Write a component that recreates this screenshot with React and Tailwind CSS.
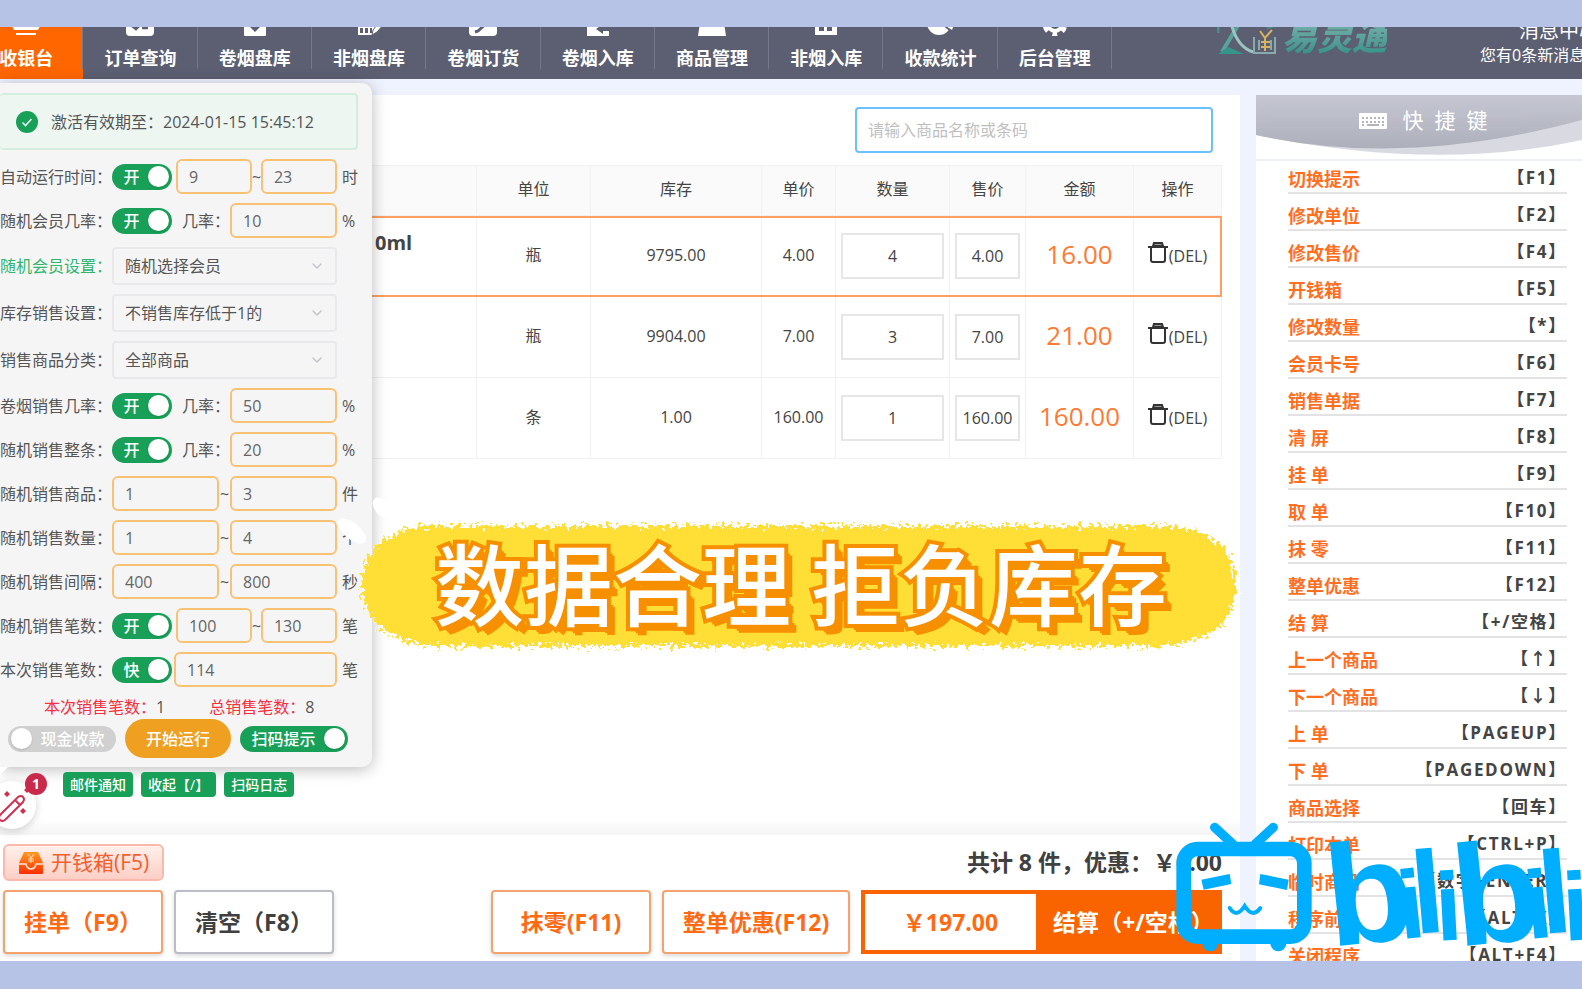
import { useState } from 'react';
import { ChevronDown } from 'lucide-react';

const NAV = [
  { label: '收银台', icon: 'cashier', active: true },
  { label: '订单查询', icon: 'orders' },
  { label: '卷烟盘库', icon: 'check' },
  { label: '非烟盘库', icon: 'gridpen' },
  { label: '卷烟订货', icon: 'edit' },
  { label: '卷烟入库', icon: 'inbound' },
  { label: '商品管理', icon: 'goods' },
  { label: '非烟入库', icon: 'store' },
  { label: '收款统计', icon: 'pie' },
  { label: '后台管理', icon: 'gear' },
];

const ITEMS = [
  { id: 1, name: '0ml', unit: '瓶', stock: '9795.00', price: '4.00', qty: '4', sale: '4.00', total: '16.00' },
  { id: 2, name: '', unit: '瓶', stock: '9904.00', price: '7.00', qty: '3', sale: '7.00', total: '21.00' },
  { id: 3, name: '', unit: '条', stock: '1.00', price: '160.00', qty: '1', sale: '160.00', total: '160.00' },
];

const HOTKEYS = [
  ['切换提示', 'F1'],
  ['修改单位', 'F2'],
  ['修改售价', 'F4'],
  ['开钱箱', 'F5'],
  ['修改数量', '*'],
  ['会员卡号', 'F6'],
  ['销售单据', 'F7'],
  ['清 屏', 'F8'],
  ['挂 单', 'F9'],
  ['取 单', 'F10'],
  ['抹 零', 'F11'],
  ['整单优惠', 'F12'],
  ['结 算', '+/空格'],
  ['上一个商品', '↑'],
  ['下一个商品', '↓'],
  ['上 单', 'PAGEUP'],
  ['下 单', 'PAGEDOWN'],
  ['商品选择', '回车'],
  ['打印本单', 'CTRL+P'],
  ['临时商品', '数字+ENTER'],
  ['程序前台', 'ALT+X'],
  ['关闭程序', 'ALT+F4'],
];

// ─── Icons ───────────────────────────────────────────────────────────────────
function NavIcon({ name }) {
  const bg = '#5c5f71';
  return (
    <svg viewBox="0 0 28 28" className="size-7 shrink-0" fill="#fff">
      {name === 'cashier' && <><path d="M2 4h24v4H2zM2 12h24v3H2zM0 18h28l-2 4H2z" /><path d="M4 25h20v2H4z" /></>}
      {name === 'orders' && <><rect y="4" width="28" height="24" rx="4" /><path d="M6 18l4 3 3-3M16 20h6" stroke={bg} strokeWidth="2.5" fill="none" /></>}
      {name === 'check' && <><rect x="3" y="4" width="22" height="24" rx="1" /><path d="M8 18l6 6 6-6z" fill={bg} /></>}
      {name === 'gridpen' && <><path d="M3 4h20v14l-6 9H3z" /><path d="M5 20h3v5H5zM10 20h3v5h-3zM15 20h2v5h-2z" fill={bg} /><path d="M17 27l1-5 7-9 4 3-7 8z" stroke={bg} strokeWidth="1" /></>}
      {name === 'edit' && <><rect y="4" width="28" height="24" rx="4" /><path d="M6 24l3-1L21 12" stroke={bg} strokeWidth="3" fill="none" /></>}
      {name === 'inbound' && <><path d="M3 4h22v24H3z" /><path d="M12 21l7-5v3h8v4h-8v3z" fill={bg} /></>}
      {name === 'goods' && <path d="M3 8h22l3 20H0z" />}
      {name === 'store' && <><path d="M3 6h22v21H3z" /><path d="M7 17h5v6H7zM15 17h5v6h-5z" fill={bg} /></>}
      {name === 'pie' && <><circle cx="12" cy="15" r="12" /><path d="M14 15l9 7" stroke={bg} strokeWidth="2" /><path d="M18 17h9l-2 5z" /></>}
      {name === 'gear' && (
        <>
          <circle cx="14" cy="16" r="7" stroke="#fff" strokeWidth="4" fill="none" />
          <circle cx="14" cy="16" r="10" stroke="#fff" strokeWidth="5" strokeDasharray="5 5.47" strokeDashoffset="2.5" transform="rotate(90 14 16)" fill="none" />
        </>
      )}
    </svg>
  );
}

function BrandMark() {
  return (
    <svg viewBox="0 0 60 40" className="h-10 w-15" fill="none">
      <path d="M1 10v6" stroke="#3f938a" strokeWidth="3" />
      <path d="M23 5L5 35" stroke="#5aa39c" strokeWidth="4" />
      <path d="M1 37L11 30L27 37z" fill="#36958a" />
      <path d="M14 6q6 24 22 29" stroke="#9cc4c2" strokeWidth="3" />
      <path d="M37 20v16h21V20M42 23v10M54 23v10" stroke="#8aa9ab" strokeWidth="2" />
      <path d="M43 14l5 7 7-8M48 21v13M44 25h9M44 30h9" stroke="#d9b260" strokeWidth="2" />
      <path d="M50 11l8-2" stroke="#3f938a" strokeWidth="2" />
    </svg>
  );
}

function TrashIcon() {
  return (
    <svg viewBox="0 0 20 22" className="h-[22px] w-5" fill="none" stroke="#333" strokeWidth="2">
      <path d="M0 5h20M3 5v13q0 2 2 2h10q2 0 2-2V5" />
      <path d="M5 4l1-3h8l1 3z" fill="#999" />
    </svg>
  );
}

function DrawerIcon() {
  return (
    <svg viewBox="0 0 26 24" className="h-6 w-[26px]">
      <defs>
        <linearGradient id="drawer" x1="0" y1="0" x2="0" y2="1">
          <stop offset="0" stopColor="#ff9a1f" />
          <stop offset="1" stopColor="#ff2d00" />
        </linearGradient>
      </defs>
      <path d="M6 1h14l5 11v10q0 1-1 1H2q-1 0-1-1V12z" fill="url(#drawer)" />
      <path d="M1 13h7q1 5 5 5t5-5h7" stroke="#ffe3d6" strokeWidth="1.5" fill="none" />
      <path d="M10 3l3 4 3-4M13 7v5M10 8h6M10 10h6" stroke="#ffd9b0" strokeWidth="1.2" fill="none" />
    </svg>
  );
}

function WandIcon() {
  return (
    <svg viewBox="0 0 36 36" className="size-9" fill="none" stroke="#d03050" strokeWidth="2">
      <path d="M6 28L24 10q3-2 5 0t0 5L11 33q-3 2-5 0t0-5zM21 13l5 5" />
      <path d="M13 4l3 3-3 3-3-3zM33 0l3 3-3 3-3-3zM29 21l3 3-3 3-3-3z" fill="#d03050" stroke="none" />
    </svg>
  );
}

function KeyboardIcon() {
  return (
    <svg viewBox="0 0 28 16" className="h-4 w-7">
      <rect width="28" height="16" rx="1" fill="#fff" />
      <path d="M3 5h22M3 9h22" stroke="#b3b4c0" strokeWidth="2" strokeDasharray="2 2" />
      <path d="M3 12h2M8 12h12M23 12h2" stroke="#b3b4c0" strokeWidth="2" />
    </svg>
  );
}

// ─── Settings popover ────────────────────────────────────────────────────────
function Toggle({ text, defaultOn = true, label, wide }) {
  const [on, setOn] = useState(defaultOn);
  return (
    <label
      className={`flex h-[26px] shrink-0 cursor-pointer items-center rounded-full px-[3px] font-medium text-white ${
        wide ? 'w-[108px]' : 'w-[60px]'
      } ${on ? 'bg-[#18a058]' : 'flex-row-reverse bg-[#d0d0d0]'}`}
    >
      <input type="checkbox" className="sr-only" aria-label={label || text} checked={on} onChange={e => setOn(e.target.checked)} />
      <span className="flex-1 text-center">{text}</span>
      <span className="size-[21px] rounded-full bg-white shadow-sm" />
    </label>
  );
}

function NumInput({ value, label, size = 'md' }) {
  const width = { sm: 'w-[76px]', md: 'w-[107px]', lg: 'w-[163px]' }[size];
  return (
    <input
      aria-label={label}
      defaultValue={value}
      className={`h-[35px] rounded-md border-2 border-[#f8c276] bg-transparent px-[11px] text-[#666] outline-none ${width}`}
    />
  );
}

function Row({ label, unit, green, children }) {
  return (
    <div className="flex items-center whitespace-nowrap">
      <span className={`w-28 shrink-0 ${green ? 'text-[#2fb56e]' : ''}`}>{label}：</span>
      <div className="flex w-[225px] shrink-0 items-center justify-between">{children}</div>
      {unit && <span className="pl-[5px]">{unit}</span>}
    </div>
  );
}

function SelectRow({ label, value, green }) {
  return (
    <Row label={label} green={green}>
      <div className="relative w-full">
        <select aria-label={label} className="block h-[38px] w-full appearance-none rounded-sm border-2 border-[#e9e9ec] bg-transparent px-[11px] outline-none">
          <option>{value}</option>
        </select>
        <ChevronDown className="pointer-events-none absolute top-[11px] right-3 size-4 text-[#c2c2c8]" strokeWidth={2} />
      </div>
    </Row>
  );
}

function RateRow({ label, value }) {
  return (
    <Row label={label} unit="%">
      <Toggle text="开" label={label} />
      <span className="flex items-center">几率：<NumInput value={value} label={`${label}几率`} /></span>
    </Row>
  );
}

function RangeRow({ label, from, to, unit, toggle }) {
  const size = toggle ? 'sm' : 'md';
  return (
    <Row label={label} unit={unit}>
      {toggle && <Toggle text="开" label={label} />}
      <NumInput value={from} label={`${label}下限`} size={size} />
      {toggle ? <span className="-mx-1">~</span> : <span>~</span>}
      <NumInput value={to} label={`${label}上限`} size={size} />
    </Row>
  );
}

function SettingsPanel() {
  return (
    <div className="absolute top-1 left-0 z-10 w-[372px] text-[#555]">
      <div className="rounded-r-[10px] bg-[#f5f5f5] pt-[10px] pb-[9px] shadow-[0_2px_16px_rgba(0,0,0,0.28)]">
        <div className="mr-[14px] flex h-[57px] items-center rounded-sm border-2 border-l-0 border-[#d3eede] bg-[#edf6f1] pl-4">
          <svg viewBox="0 0 22 22" className="size-[22px]">
            <circle cx="11" cy="11" r="11" fill="#18a058" />
            <path d="M6.5 11.5l3 3 6-6.5" stroke="#e6f5ec" strokeWidth="1.6" fill="none" />
          </svg>
          <span className="pl-[13px]">激活有效期至：2024-01-15 15:45:12</span>
        </div>

        <div className="mt-[9px] flex flex-col gap-[9px]">
          <RangeRow label="自动运行时间" from="9" to="23" unit="时" toggle />
          <RateRow label="随机会员几率" value="10" />
          <SelectRow label="随机会员设置" value="随机选择会员" green />
          <SelectRow label="库存销售设置" value="不销售库存低于1的" />
          <SelectRow label="销售商品分类" value="全部商品" />
          <RateRow label="卷烟销售几率" value="50" />
          <RateRow label="随机销售整条" value="20" />
          <RangeRow label="随机销售商品" from="1" to="3" unit="件" />
          <RangeRow label="随机销售数量" from="1" to="4" unit="个" />
          <RangeRow label="随机销售间隔" from="400" to="800" unit="秒" />
          <RangeRow label="随机销售笔数" from="100" to="130" unit="笔" toggle />
          <Row label="本次销售笔数" unit="笔">
            <Toggle text="快" label="本次销售笔数" />
            <NumInput value="114" label="本次销售笔数" size="lg" />
          </Row>
        </div>

        <div className="mt-2 flex gap-11 pl-11">
          <span><span className="text-[#f5303f]">本次销售笔数：</span>1</span>
          <span><span className="text-[#f5303f]">总销售笔数：</span>8</span>
        </div>
        <div className="flex items-center gap-[9px] pl-2">
          <Toggle text="现金收款" defaultOn={false} wide />
          <button type="button" className="h-[39px] w-[106px] rounded-full bg-[#f0a020] font-medium text-white">开始运行</button>
          <Toggle text="扫码提示" wide />
        </div>
      </div>

      <div className="mt-[5px] flex gap-2 pl-[63px] text-sm font-medium text-white">
        <button type="button" className="h-[25px] rounded-sm bg-[#18a058] px-[7px]">邮件通知</button>
        <button type="button" className="h-[25px] rounded-sm bg-[#18a058] px-[7px]">收起【/】</button>
        <button type="button" className="h-[25px] rounded-sm bg-[#18a058] px-[7px]">扫码日志</button>
      </div>

      <span className="absolute bottom-[22px] left-0 border-t-8 border-r-8 border-t-white border-r-transparent" />
      <button
        type="button"
        aria-label="助手"
        className="absolute -bottom-8 -left-3 flex size-12 items-center justify-center rounded-full bg-white shadow-[0_2px_8px_rgba(0,0,0,0.18)]"
      >
        <WandIcon />
        <span className="absolute -top-2 -right-[11px] flex size-[22px] items-center justify-center rounded-full bg-[#c92a4c] text-sm font-bold text-white">1</span>
      </button>
    </div>
  );
}

// ─── Cart ────────────────────────────────────────────────────────────────────
function CartTable() {
  return (
    <table className="w-full table-fixed border-collapse text-center text-[#444]">
      <colgroup>
        <col />
        <col className="w-[114px]" />
        <col className="w-[171px]" />
        <col className="w-[74px]" />
        <col className="w-[114px]" />
        <col className="w-[76px]" />
        <col className="w-[108px]" />
        <col className="w-[88px]" />
      </colgroup>
      <thead>
        <tr className="h-[50px] bg-[#fafafa]">
          {['', '单位', '库存', '单价', '数量', '售价', '金额', '操作'].map((h, i) => (
            <th key={i} className="border border-[#f1f1f1] pb-1 font-normal">{h}</th>
          ))}
        </tr>
      </thead>
      <tbody>
        {ITEMS.map((it, i) => (
          <tr key={it.id} className={`h-[81px] ${i === 0 ? 'outline-2 -outline-offset-2 outline-[#ff9f63]' : ''}`}>
            <td className="border border-[#f1f1f1] pt-[13px] pl-[374px] text-left align-top text-xl font-bold">{it.name}</td>
            <td className="border border-[#f1f1f1] pb-0.5">{it.unit}</td>
            <td className="border border-[#f1f1f1] pb-0.5">{it.stock}</td>
            <td className="border border-[#f1f1f1] pb-0.5">{it.price}</td>
            <td className="border border-[#f1f1f1] px-[5px]">
              <input aria-label="数量" defaultValue={it.qty} className="h-[46px] w-full border-2 border-[#e6e6e6] text-center outline-none" />
            </td>
            <td className="border border-[#f1f1f1] px-[5px]">
              <input aria-label="售价" defaultValue={it.sale} className="h-[46px] w-full border-2 border-[#e6e6e6] text-center outline-none" />
            </td>
            <td className="border border-[#f1f1f1] pb-1 text-[26px] text-[#ff7a33]">{it.total}</td>
            <td className="border border-[#f1f1f1]">
              <button type="button" className="inline-flex items-start gap-px">
                <TrashIcon />
                <span className="pt-0.5">(DEL)</span>
              </button>
            </td>
          </tr>
        ))}
      </tbody>
    </table>
  );
}

const bigBtn = 'h-16 rounded-sm border-2 bg-white text-[23px] font-bold shadow-[0_2px_4px_rgba(0,0,0,0.15)]';

function Footer() {
  return (
    <footer className="bg-white pt-[9px] pr-[18px] pb-[7px] pl-[3px]">
      <div className="flex h-[37px] items-center justify-between">
        <button
          type="button"
          className="flex h-[37px] items-center gap-[7px] rounded-md border-2 border-[#fbb9ac] bg-linear-to-b from-[#fff0ea] to-[#fccfc6] px-[13px] text-[21px] text-[#f2602f]"
        >
          <DrawerIcon />
          开钱箱(F5)
        </button>
        <p className="text-[23px] font-bold text-[#404040]">共计 8 件，优惠：￥0.00</p>
      </div>
      <div className="mt-[9px] flex gap-[11px]">
        <button type="button" className={`${bigBtn} w-40 border-[#f2a36e] text-[#ff6a13]`}>挂单（F9）</button>
        <button type="button" className={`${bigBtn} w-40 border-[#babcc6] text-[#404040]`}>清空（F8）</button>
        <button type="button" className={`${bigBtn} ml-auto w-40 border-[#f2a36e] text-[#ff6a13]`}>抹零(F11)</button>
        <button type="button" className={`${bigBtn} w-[188px] border-[#f2a36e] text-[#ff6a13]`}>整单优惠(F12)</button>
        <button type="button" className="flex h-16 w-[361px] border-4 border-[#fa6400] bg-[#fa6400] text-[23px] font-bold text-white">
          <span className="flex h-full w-[171px] items-center justify-center bg-white text-[#ff6a13]">￥197.00</span>
          <span className="flex h-full flex-1 items-center pl-[17px] whitespace-nowrap">结算（+/空格）</span>
        </button>
      </div>
    </footer>
  );
}

function Hotkeys() {
  return (
    <aside className="w-[326px] shrink-0 overflow-hidden bg-white">
      <div className="relative h-[66px] border-b-2 border-[#eef0f8]">
        <svg viewBox="0 0 326 64" className="absolute inset-0 h-16 w-full" preserveAspectRatio="none">
          <defs>
            <linearGradient id="hk" x1="0" y1="0" x2="0" y2="1">
              <stop offset="0" stopColor="#c6c7d2" />
              <stop offset="1" stopColor="#adafbb" />
            </linearGradient>
          </defs>
          <path d="M0 0H326V45Q180 77 0 40z" fill="#d9dae1" />
          <path d="M0 0H326V25Q150 73 0 40z" fill="url(#hk)" />
        </svg>
        <h2 className="relative flex h-[52px] items-center justify-center gap-4 pl-2 text-[21px] text-white">
          <KeyboardIcon />
          快&nbsp;&nbsp;捷&nbsp;&nbsp;键
        </h2>
      </div>
      <ul className="-mt-1 mr-[15px] ml-8">
        {HOTKEYS.map(([name, key]) => (
          <li key={name} className="flex h-[37px] items-end justify-between border-b-2 border-[#e3e3e6] font-bold">
            <span className="text-lg leading-[26px] text-[#ff6f1f]">{name}</span>
            <span className="text-[17px] leading-7 tracking-widest text-[#444]">【{key}】</span>
          </li>
        ))}
      </ul>
    </aside>
  );
}

// ─── Overlays ────────────────────────────────────────────────────────────────
function Banner() {
  return (
    <div className="pointer-events-none absolute top-[442px] left-[358px] z-20 flex h-[128px] w-[886px] items-center justify-center">
      <svg viewBox="0 0 886 128" className="absolute inset-0 size-full overflow-visible">
        <defs>
          <filter id="rough" x="-5%" y="-10%" width="110%" height="120%">
            <feTurbulence type="fractalNoise" baseFrequency="0.25" numOctaves="3" seed="4" />
            <feDisplacementMap in="SourceGraphic" scale="18" xChannelSelector="R" yChannelSelector="G" />
          </filter>
        </defs>
        <path d="M70 3H800Q880 8 880 64T800 127H70Q4 116 4 64T70 3z" fill="#fff" filter="url(#rough)" />
        <path d="M70 5H800Q878 8 878 64T800 125H70Q4 116 4 64T70 5z" fill="#ffde34" filter="url(#rough)" />
        <ellipse cx="24" cy="-13" rx="12" ry="7" transform="rotate(52 24 -13)" fill="#fff" />
        <ellipse cx="-6" cy="10" rx="17" ry="8" transform="rotate(40 -6 10)" fill="#fff" />
      </svg>
      <p className="relative pb-2 font-['Noto_Sans_CJK_SC',sans-serif] text-[89px] leading-[120px] font-medium whitespace-nowrap text-white [-webkit-text-stroke:8px_#f79000] [paint-order:stroke_fill] [text-shadow:2px_2px_0_#f79000,4px_4px_0_#f79000,6px_6px_0_#f79000,8px_8px_0_#f79000]">
        数据合理 拒负库存
      </p>
    </div>
  );
}

function Watermark() {
  return (
    <svg viewBox="0 0 1326 987" className="pointer-events-none absolute right-0 bottom-0 z-30 h-[329px] w-[442px]">
      <g fill="none" stroke="#00aeff" strokeLinecap="round">
        <rect x="131" y="567" width="362" height="263" rx="42" strokeWidth="44" />
        <path d="M224 502L278 552M400 502L346 552" strokeWidth="28" />
        <path d="M269 744Q290 776 314 738Q338 776 361 744" strokeWidth="12" />
      </g>
      <g fill="#00aeff">
        <path d="M184 659L269 642L274 672L191 689zM361 642L446 659L441 690L357 673z" />
        <circle cx="211" cy="850" r="24" />
        <circle cx="415" cy="850" r="24" />
      </g>
      <text
        x="572 782 824 890 954 1164 1206 1272"
        y="860 838 822 842 860 838 822 842"
        rotate="-6 -6 -5 -3 -6 -6 -5 -3"
        fill="#00aeff"
        fontWeight="700"
        fontFamily="'Liberation Sans', sans-serif"
      >
        <tspan fontSize="430">b</tspan>
        <tspan fontSize="290">i</tspan>
        <tspan fontSize="350">l</tspan>
        <tspan fontSize="290">i</tspan>
        <tspan fontSize="430">b</tspan>
        <tspan fontSize="290">i</tspan>
        <tspan fontSize="350">l</tspan>
        <tspan fontSize="290">i</tspan>
      </text>
    </svg>
  );
}

export default function App() {
  return (
    <div className="relative flex h-screen flex-col overflow-hidden bg-[#b7c3e6] pt-[27px] pb-7 font-['Open_Sans','Noto_Sans_CJK_SC',sans-serif] text-base">
      <header className="flex h-[52px] shrink-0 overflow-hidden bg-[#5c5f71] text-white">
        <nav className="-ml-[31px] grid w-[1143px] shrink-0 grid-cols-10">
          {NAV.map(n => (
            <a
              key={n.label}
              href="#"
              className={`relative flex h-[52px] flex-col items-center justify-end gap-[10px] pb-[9px] text-lg leading-6 font-bold after:absolute after:top-0 after:right-0 after:h-[42px] after:w-px after:bg-[#75788a] ${
                n.active ? 'bg-[#ff6600]' : ''
              }`}
            >
              <NavIcon name={n.icon} />
              {n.label}
            </a>
          ))}
        </nav>
        <div className="flex flex-1 items-end justify-between overflow-hidden">
          <div className="flex items-end pb-[22px] pl-[105px]">
            <BrandMark />
            <span className="bg-linear-to-b from-[#7fb5b2] to-[#2f9086] bg-clip-text pl-[5px] text-[35px] leading-10 font-black text-transparent italic">易灵通</span>
          </div>
          <div className="w-[102px] shrink-0 pb-3 whitespace-nowrap">
            <p className="pl-[39px] text-xl leading-6">消息中心</p>
            <p className="leading-6">您有0条新消息</p>
          </div>
        </div>
      </header>

      <div className="relative flex min-h-0 flex-1 gap-4 bg-[#eff3ff] pt-4">
        <main className="flex min-w-0 flex-1 flex-col bg-white">
          <div className="min-h-0 flex-1 bg-linear-to-b from-white from-98% to-[#f4f4f4] pt-3 pr-[18px]">
            <div className="mb-3 flex justify-end pr-[9px]">
              <input
                aria-label="商品搜索"
                placeholder="请输入商品名称或条码"
                className="h-[46px] w-[358px] rounded-sm border-2 border-[#6cc0fb] px-[11px] outline-none placeholder:text-[#bfbfbf]"
              />
            </div>
            <CartTable />
          </div>
          <Footer />
        </main>
        <Hotkeys />
        <SettingsPanel />
        <Banner />
      </div>
      <Watermark />
    </div>
  );
}
